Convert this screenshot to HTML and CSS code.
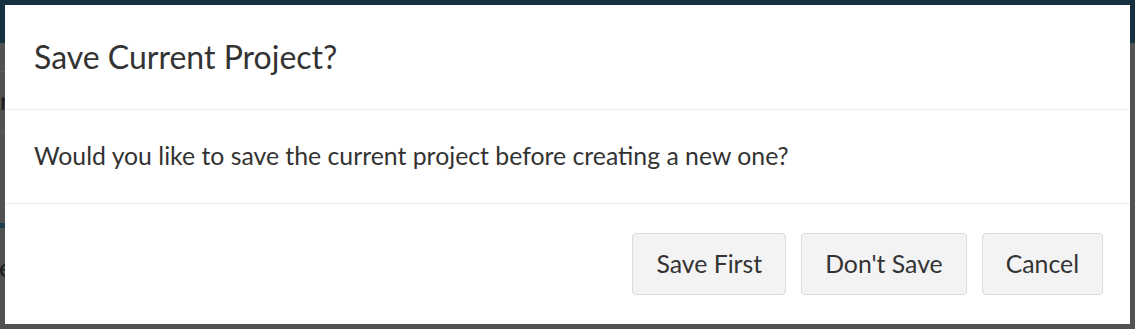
FILE: index.html
```html
<!DOCTYPE html>
<html lang="en">
<head>
<meta charset="utf-8">
<title>Save Current Project?</title>
<link rel="stylesheet" href="styles.css">
</head>
<body>
<div class="page">
  <div class="page-top"></div>
  <div class="page-rest">
    <div class="bg-line bg-line-1"></div>
    <div class="bg-word bg-word-1">recent</div>
    <div class="bg-line bg-line-2"></div>
    <div class="bg-strip"></div>
    <div class="bg-word bg-word-2">edit</div>
  </div>
</div>
<div class="overlay">
  <div class="modal" role="dialog" aria-labelledby="modal-title">
    <div class="modal-header">
      <h4 class="modal-title" id="modal-title">Save Current Project?</h4>
    </div>
    <div class="modal-body">
      <p>Would you like to save the current project before creating a new one?</p>
    </div>
    <div class="modal-footer">
      <button class="btn" type="button">Save First</button>
      <button class="btn" type="button">Don't Save</button>
      <button class="btn" type="button">Cancel</button>
    </div>
  </div>
</div>
</body>
</html>
```

FILE: styles.css
```css
html, body {
  margin: 0;
  padding: 0;
  width: 1135px;
  height: 329px;
  overflow: hidden;
  background: #525252;
  font-family: "Source Sans Pro", Lato, "Open Sans", sans-serif;
}

.page {
  position: absolute;
  inset: 0;
  display: flex;
  flex-direction: column;
}

.page-top {
  height: 43px;
  background: #17303f;
}

.page-rest {
  flex: 1;
  background: #525252;
  position: relative;
}

.bg-line {
  position: absolute;
  left: 0;
  width: 5px;
  height: 1px;
  background: #5c5c5c;
}
.bg-line-1 { top: 28px; }
.bg-line-2 { top: 89px; }

.bg-strip {
  position: absolute;
  left: 0;
  top: 180px;
  width: 5px;
  height: 5px;
  background: #1e3e51;
}

.bg-word {
  position: absolute;
  left: 0;
  color: #1a1a1a;
  font-size: 25px;
  line-height: 1;
}
.bg-word-1 { top: 45px; }
.bg-word-2 { top: 212px; left: -1px; }

.overlay {
  position: absolute;
  inset: 0;
  padding: 5px;
}

.modal {
  width: 1125px;
  height: 319px;
  background: #fff;
  display: flex;
  flex-direction: column;
  color: #333;
}

.modal-header {
  height: 104px;
  padding: 0 29px;
  display: flex;
  align-items: center;
  border-bottom: 1px solid #eeeeee;
  box-sizing: content-box;
}

.modal-title {
  margin: 0;
  font-size: 32px;
  font-weight: 400;
  line-height: 1.2;
  color: #333;
}

.modal-body {
  height: 93px;
  padding: 0 29px;
  display: flex;
  align-items: center;
  border-bottom: 1px solid #eeeeee;
  box-sizing: content-box;
}

.modal-body p {
  margin: 0;
  font-size: 24.8px;
  line-height: 1.3;
}

.modal-footer {
  flex: 1;
  padding: 29px 27px 0;
  display: flex;
  justify-content: flex-end;
  align-items: flex-start;
  gap: 15px;
}

.btn {
  height: 62px;
  padding: 0 23px;
  border: 1px solid #dcdcdc;
  border-radius: 4px;
  background: #f3f3f3;
  color: #333;
  font-family: inherit;
  font-size: 24.8px;
  line-height: 1;
}
```
